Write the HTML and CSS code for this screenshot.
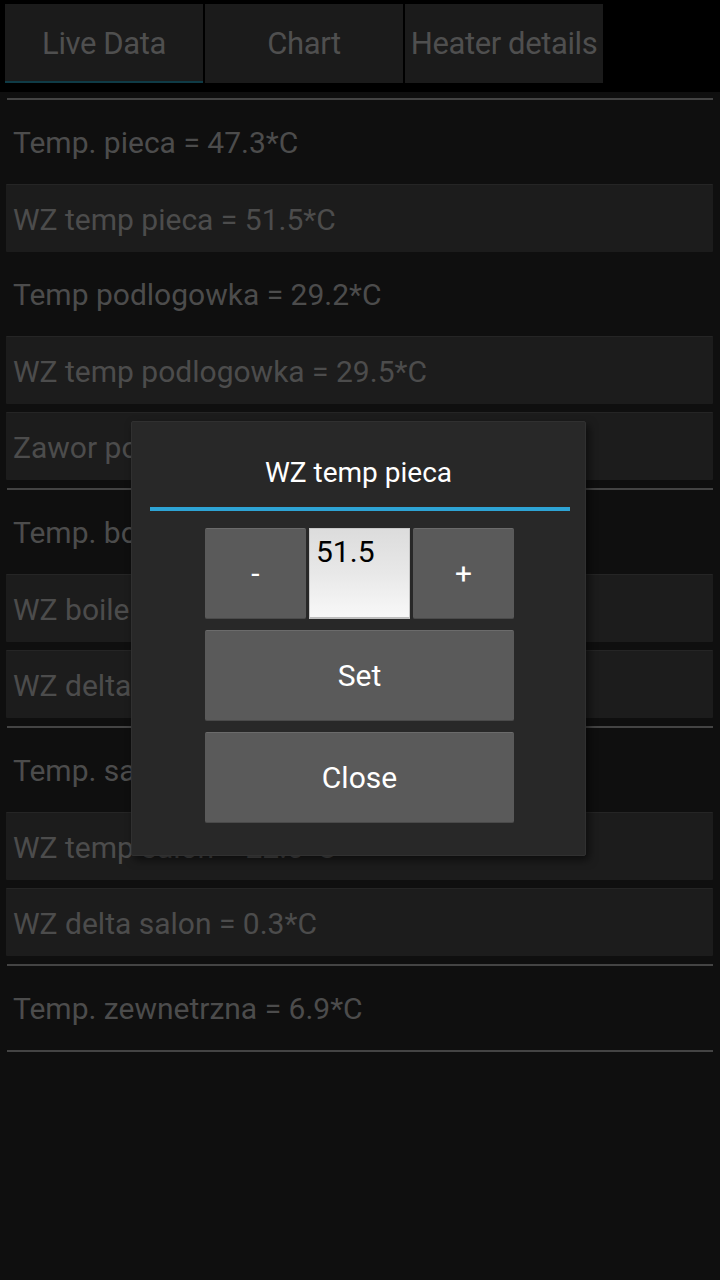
FILE: index.html
```html
<!DOCTYPE html>
<html lang="pl">
<head>
<meta charset="utf-8">
<title>Live Data</title>
<link rel="stylesheet" href="styles.css">
</head>
<body>
<div class="screen">
  <nav class="tabs">
    <div class="tab active">Live Data</div>
    <div class="tab">Chart</div>
    <div class="tab">Heater details</div>
  </nav>
  <main class="content">
    <div class="divider"></div>
    <div class="row">Temp. pieca = 47.3*C</div>
    <div class="row box">WZ temp pieca = 51.5*C</div>
    <div class="row">Temp podlogowka = 29.2*C</div>
    <div class="row box">WZ temp podlogowka = 29.5*C</div>
    <div class="row box">Zawor podlogowka = 35%</div>
    <div class="divider"></div>
    <div class="row">Temp. boiler = 44.1*C</div>
    <div class="row box">WZ boiler = 45.0*C</div>
    <div class="row box">WZ delta boiler = 5.0*C</div>
    <div class="divider"></div>
    <div class="row">Temp. salon = 21.8*C</div>
    <div class="row box">WZ temp salon = 22.0*C</div>
    <div class="row box">WZ delta salon = 0.3*C</div>
    <div class="divider"></div>
    <div class="row">Temp. zewnetrzna = 6.9*C</div>
    <div class="divider"></div>
  </main>

  <div class="dialog">
    <div class="dialog-title">WZ temp pieca</div>
    <div class="dialog-rule"></div>
    <div class="dialog-body">
      <div class="stepper">
        <button class="btn small">-</button>
        <div class="value">51.5</div>
        <button class="btn small">+</button>
      </div>
      <button class="btn wide">Set</button>
      <button class="btn wide">Close</button>
    </div>
  </div>
</div>
</body>
</html>
```

FILE: styles.css
```css
* {
  box-sizing: border-box;
}

html, body {
  margin: 0;
  padding: 0;
  background: #000;
  width: 720px;
  height: 1280px;
  overflow: hidden;
  font-family: Roboto, "Noto Sans", "Liberation Sans", sans-serif;
}

.screen {
  position: relative;
  width: 720px;
  height: 1280px;
  display: flex;
  flex-direction: column;
}

.tabs {
  display: flex;
  gap: 2px;
  padding: 4px 0 0 5px;
  height: 83px;
  flex: none;
}

.tab {
  width: 198px;
  height: 79px;
  background: #1b1b1b;
  color: #4f4f4f;
  font-size: 31px;
  display: flex;
  align-items: center;
  justify-content: center;
  letter-spacing: -0.4px;
  padding-top: 2px;
  border-bottom: 2px solid transparent;
  white-space: nowrap;
}

.tab.active {
  border-bottom-color: #0f3b46;
}

.content {
  margin-top: 9px;
  flex: 1;
  background: #0f0f0f;
  padding: 2px 7px 0 6px;
  display: flex;
  flex-direction: column;
}

.divider {
  flex: none;
  height: 2px;
  background: #444;
  margin: 4px 0 4px 1px;
}

.row {
  flex: none;
  height: 76px;
  padding: 4px 7px;
  display: flex;
  align-items: center;
  font-size: 30px;
  color: #4c4c4c;
  white-space: nowrap;
}

.row.box {
  height: 68px;
  margin: 4px 0;
  padding: 2px 7px 0;
  background: #1c1c1c;
  border-top: 1px solid #252525;
  border-radius: 1px;
}

.dialog {
  position: absolute;
  left: 131px;
  top: 421px;
  width: 455px;
  height: 435px;
  background: #282828;
  border: 1px solid #303030;
  border-radius: 2px;
  box-shadow: 3px 4px 8px rgba(0, 0, 0, 0.55);
  display: flex;
  flex-direction: column;
}

.dialog-title {
  height: 85px;
  display: flex;
  align-items: center;
  justify-content: center;
  color: #fff;
  font-size: 28px;
  padding-top: 16px;
}

.dialog-rule {
  height: 4px;
  background: #2ea4d5;
  margin: 0 15px 0 18px;
}

.dialog-body {
  display: flex;
  flex-direction: column;
  align-items: center;
  padding: 17px 0 0 2px;
  gap: 11px;
}

.stepper {
  display: flex;
  gap: 3px;
  width: 309px;
  height: 91px;
}

.btn {
  font-family: Roboto, "Noto Sans", "Liberation Sans", sans-serif;
  background: #5a5a5a;
  color: #fff;
  border: none;
  border-top: 1px solid #6b6b6b;
  border-bottom: 1px solid #4a4a4a;
  border-radius: 2px;
  font-size: 30px;
  padding: 0;
  margin: 0;
  display: flex;
  align-items: center;
  justify-content: center;
}

.btn.small {
  width: 101px;
  height: 91px;
}

.btn.wide {
  width: 309px;
  height: 91px;
}

.value {
  width: 101px;
  height: 91px;
  background: linear-gradient(to bottom, #dcdcdc 0%, #e8e8e8 50%, #f8f8f8 100%);
  border: 1px solid #c8c8c8;
  border-bottom: 2px solid #bdbdbd;
  color: #000;
  font-size: 30px;
  padding: 6px 0 0 6px;
  line-height: 34px;
}
```
